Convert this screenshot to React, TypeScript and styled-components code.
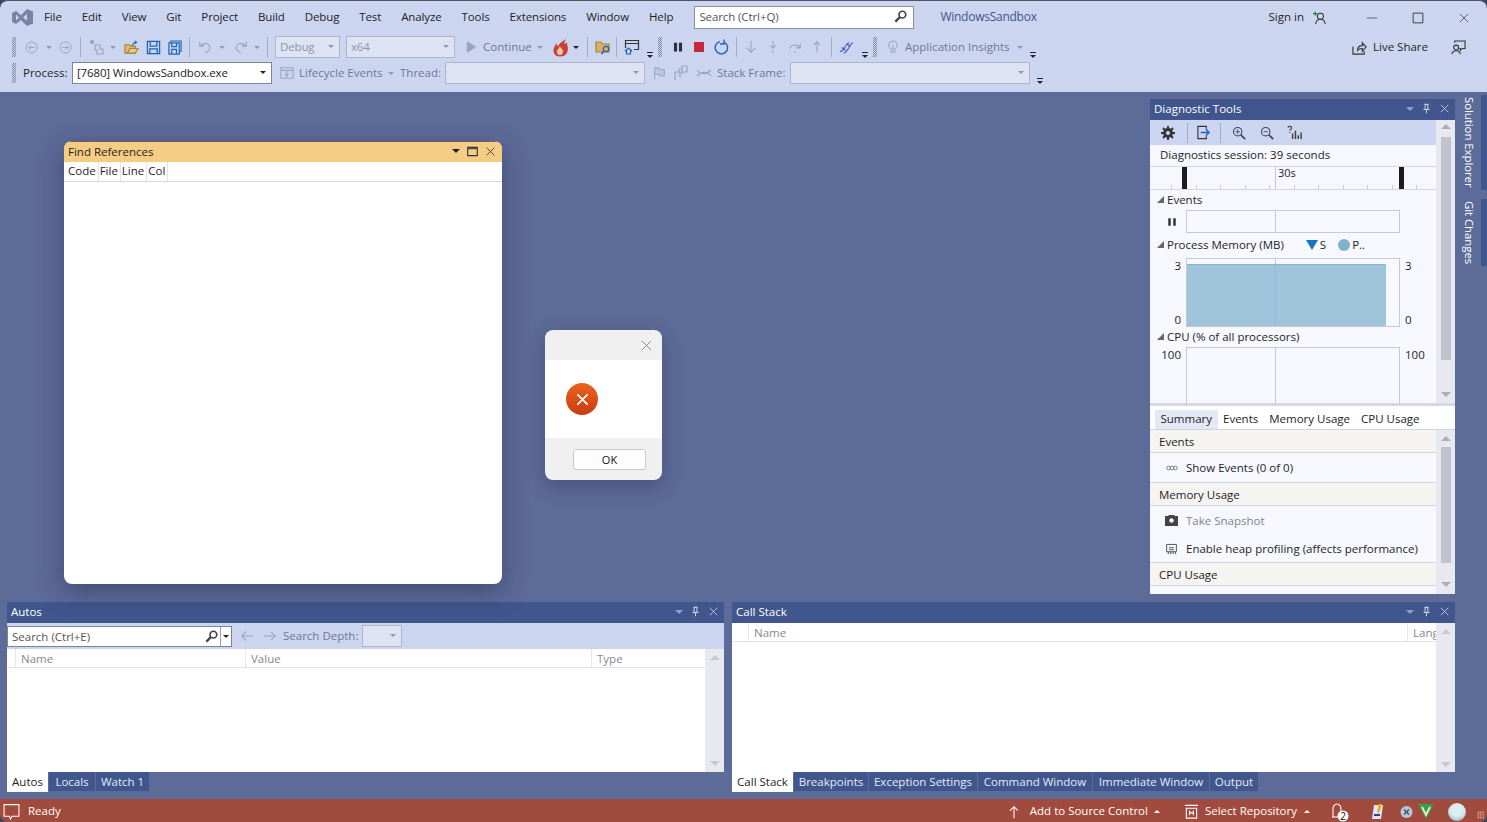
import React from "react";
import styled, { createGlobalStyle } from "styled-components";

const GlobalStyle = createGlobalStyle`
  html, body { margin: 0; padding: 0; background: #3f4554; }
  body { font-family: "Open Sans", "Liberation Sans", sans-serif; font-size: 11.5px; color: #1e1e1e; overflow: hidden; }
  * { box-sizing: border-box; }
`;

const Shell = styled.div`
  position: relative;
  width: 1487px;
  height: 822px;
  display: flex;
  flex-direction: column;
  background: #5d6b99;
  border-radius: 8px;
  overflow: hidden;
`;

/* ---- top chrome ---- */
const Chrome = styled.header`
  height: 92px;
  flex: none;
  background: #ccd5f0;
  border-top: 1px solid #4d5566;
  border-radius: 8px 8px 0 0;
`;
const TitleRow = styled.div`
  height: 33px;
  display: flex;
  align-items: center;
  padding-left: 12px;
`;
const MenuList = styled.nav`
  display: flex;
  margin-left: 1px;
`;
const MenuItem = styled.span`
  padding: 0 10px 2px;
  line-height: 20px;
  letter-spacing: -0.12px;
  white-space: nowrap;
`;
const SearchBox = styled.div`
  width: 220px;
  height: 23px;
  margin-left: 11px;
  background: #fff;
  border: 1px solid #8a8f9e;
  display: flex;
  align-items: center;
  justify-content: space-between;
  padding: 0 5px 2px 4px;
  color: #555;
  letter-spacing: -0.1px;
`;
const SolutionName = styled.span`
  margin-left: 26px;
  padding-bottom: 2px;
  color: #40568d;
  font-size: 12px;
  letter-spacing: -0.25px;
`;
const SignIn = styled.span`
  margin-left: auto;
  display: flex;
  align-items: center;
  gap: 9px;
`;
const WinButtons = styled.div`
  display: flex;
  align-items: center;
  gap: 34px;
  margin-left: 39px;
  margin-right: 17px;
`;
const ToolRow = styled.div`
  height: 26px;
  display: flex;
  align-items: center;
  padding: 0 21px 0 12px;
`;
const Slot = styled.span<{ $w: number; $ml?: number }>`
  flex: none;
  width: ${(p) => p.$w}px;
  margin-left: ${(p) => p.$ml ?? 0}px;
  display: flex;
  align-items: center;
  justify-content: center;
  svg { display: block; flex: none; }
`;
const Grip = styled.span<{ $ml?: number }>`
  flex: none;
  width: 4px;
  height: 20px;
  margin-left: ${(p) => p.$ml ?? 0}px;
  background: repeating-conic-gradient(#7f89a8 0 25%, transparent 0 50%) 0 0 / 2px 2px;
`;
const Sep = styled.span<{ $ml?: number }>`
  flex: none;
  width: 1px;
  height: 20px;
  margin-left: ${(p) => p.$ml ?? 0}px;
  background: #a3adc9;
`;
const caretColors = { dark: "#222", light: "#8f98b3", title: "#8fa2cf", white: "#fff" };
const Caret = styled.span<{ $ml?: number; $tone?: keyof typeof caretColors; $up?: boolean; $size?: number }>`
  flex: none;
  width: 0;
  height: 0;
  margin-left: ${(p) => p.$ml ?? 0}px;
  border-left: ${(p) => p.$size ?? 3}px solid transparent;
  border-right: ${(p) => p.$size ?? 3}px solid transparent;
  ${(p) => (p.$up ? "border-bottom" : "border-top")}: ${(p) => p.$size ?? 3}px solid ${(p) => caretColors[p.$tone ?? "dark"]};
`;
const Customize = styled.span<{ $ml?: number }>`
  flex: none;
  width: 6px;
  height: 8px;
  margin-left: ${(p) => p.$ml ?? 0}px;
  margin-top: 17px;
  border-top: 1px solid #222;
  &::after {
    content: "";
    display: block;
    margin-top: 2px;
    width: 0;
    height: 0;
    border-left: 3px solid transparent;
    border-right: 3px solid transparent;
    border-top: 3px solid #222;
  }
`;
const Combo = styled.div<{ $w: number; $ml?: number; $on?: boolean }>`
  flex: none;
  width: ${(p) => p.$w}px;
  height: 22px;
  margin-left: ${(p) => p.$ml ?? 0}px;
  padding: 0 5px 2px 4px;
  display: flex;
  align-items: center;
  justify-content: space-between;
  background: ${(p) => (p.$on ? "#fff" : "#dde3f3")};
  border: 1px solid ${(p) => (p.$on ? "#7d8499" : "#aeb5c8")};
  color: ${(p) => (p.$on ? "#1e1e1e" : "#8b93a8")};
  letter-spacing: -0.15px;
  white-space: nowrap;
`;
const labelColors = { normal: "#1e1e1e", dim: "#6f7790", white: "#fff" };
const Label = styled.span<{ $ml?: number; $w?: number; $tone?: keyof typeof labelColors }>`
  flex: none;
  margin-left: ${(p) => p.$ml ?? 0}px;
  padding-bottom: 2px;
  ${(p) => (p.$w ? `width: ${p.$w}px;` : "")}
  color: ${(p) => labelColors[p.$tone ?? "normal"]};
  white-space: nowrap;
`;
const Push = styled.span`
  margin-left: auto;
`;

/* ---- workspace ---- */
const TopArea = styled.div`
  position: relative;
  height: 510px;
  flex: none;
  display: flex;
`;
const DocWell = styled.div`
  flex: 1;
`;
const FindWindow = styled.section`
  position: absolute;
  left: 64px;
  top: 49px;
  width: 438px;
  height: 443px;
  z-index: 3;
  background: #fff;
  border-radius: 8px;
  overflow: hidden;
  box-shadow: 0 8px 26px rgba(20, 28, 60, 0.4);
`;
const FindTitle = styled.div`
  height: 21px;
  padding: 0 6px 2px 4px;
  background: #f5cc84;
  border-top: 1px solid #6b6255;
  display: flex;
  align-items: center;
  justify-content: space-between;
`;
const Controls = styled.div`
  display: flex;
  align-items: center;
  gap: 7px;
`;
const ColumnRow = styled.div`
  height: 20px;
  display: flex;
  border-bottom: 1px solid #d8d8d8;
`;
const Column = styled.span`
  padding: 0 2px 0 1px;
  border-right: 1px solid #e4e4e4;
  line-height: 18px;
  &:first-child { padding-left: 4px; }
`;
const Dialog = styled.section`
  position: absolute;
  left: 545px;
  top: 238px;
  width: 117px;
  height: 150px;
  z-index: 4;
  display: flex;
  flex-direction: column;
  background: #f0f0f0;
  border-radius: 8px;
  overflow: hidden;
  box-shadow: 0 6px 20px rgba(20, 28, 60, 0.3);
`;
const DialogHead = styled.div`
  height: 30px;
  padding-right: 9px;
  display: flex;
  align-items: center;
  justify-content: flex-end;
`;
const DialogBody = styled.div`
  height: 78px;
  background: #fff;
  padding-left: 21px;
  display: flex;
  align-items: center;
`;
const ErrorBadge = styled.span`
  width: 32px;
  height: 32px;
  border-radius: 50%;
  background: linear-gradient(#e8641f, #c93d10);
  display: flex;
  align-items: center;
  justify-content: center;
`;
const DialogFoot = styled.div`
  flex: 1;
  padding: 11px 16px 0 28px;
`;
const OkButton = styled.button`
  width: 73px;
  height: 21px;
  padding: 0;
  background: #fdfdfd;
  border: 1px solid #c8c8c8;
  border-radius: 3px;
  font: inherit;
  font-size: 11px;
  color: #111;
`;

/* ---- tool panels ---- */
const DiagPanel = styled.section`
  width: 305px;
  height: 495px;
  margin-top: 7px;
  flex: none;
  display: flex;
  flex-direction: column;
  background: #f7f8fe;
`;
const PanelTitle = styled.div`
  height: 21px;
  flex: none;
  padding: 0 5px 2px 4px;
  display: flex;
  align-items: center;
  justify-content: space-between;
  background: #40568d;
  color: #fff;
`;
const DiagUpper = styled.div`
  height: 283px;
  flex: none;
  display: flex;
`;
const DiagMain = styled.div`
  flex: 1;
  min-width: 0;
`;
const DiagBar = styled.div`
  height: 25px;
  padding-left: 10px;
  display: flex;
  align-items: center;
  background: #ccd5f0;
`;
const Session = styled.div`
  height: 22px;
  padding-left: 10px;
  line-height: 20px;
  border-bottom: 1px solid #d3d6e2;
`;
const Ruler = styled.div`
  position: relative;
  height: 23px;
  border-bottom: 1px solid #d3d6e2;
  background: repeating-linear-gradient(90deg, #c9ccd8 0 1px, transparent 1px 24.5px) 21px 18px / 100% 4px no-repeat;
`;
const RulerMark = styled.span<{ $x: number }>`
  position: absolute;
  left: ${(p) => p.$x}px;
  top: 0;
  width: 5px;
  height: 22px;
  background: #1c1c1c;
`;
const RulerLine = styled.span`
  position: absolute;
  left: 125px;
  top: 0;
  height: 22px;
  padding-left: 2px;
  line-height: 12px;
  font-size: 11px;
  border-left: 1px solid #c3c7d4;
`;
const SectionHead = styled.div<{ $h: number }>`
  height: ${(p) => p.$h}px;
  padding: 0 0 2px 7px;
  display: flex;
  align-items: center;
  gap: 3px;
`;
const Corner = styled.span`
  width: 0;
  height: 0;
  border-style: solid;
  border-width: 0 0 7px 7px;
  border-color: transparent transparent #666 transparent;
`;
const Legend = styled.span<{ $ml: number }>`
  margin-left: ${(p) => p.$ml}px;
  display: flex;
  align-items: center;
  gap: 2px;
`;
const Triangle = styled.span`
  width: 0;
  height: 0;
  border-left: 6px solid transparent;
  border-right: 6px solid transparent;
  border-top: 10px solid #1c73bd;
`;
const Dot = styled.span`
  width: 12px;
  height: 12px;
  border-radius: 50%;
  background: #7fb3cd;
`;
const GraphRow = styled.div<{ $h: number }>`
  height: ${(p) => p.$h}px;
  display: grid;
  grid-template-columns: 36px 214px 36px;
`;
const Axis = styled.div<{ $side: "left" | "right"; $mid?: boolean }>`
  display: flex;
  flex-direction: column;
  justify-content: ${(p) => (p.$mid ? "center" : "space-between")};
  margin-bottom: ${(p) => (p.$mid ? 0 : -1)}px;
  padding: ${(p) => (p.$mid ? "0 9px 0 0" : "0 5px")};
  align-items: ${(p) => (p.$side === "left" ? "flex-end" : "flex-start")};
  font-size: 11.5px;
  line-height: 16px;
`;
const Graph = styled.div<{ $open?: boolean }>`
  position: relative;
  display: flex;
  border: 1px solid #c6cad6;
  ${(p) => (p.$open ? "border-bottom: 0;" : "")}
`;
const GraphHalf = styled.div`
  width: 89px;
  border-right: 1px solid #c6cad6;
`;
const MemoryFill = styled.div`
  position: absolute;
  left: 0;
  top: 5px;
  bottom: 0;
  width: 199px;
  background: rgba(131, 180, 207, 0.75);
  border-top: 1px dotted #6fa2bd;
`;
const Scrollbar = styled.div`
  width: 19px;
  flex: none;
  display: flex;
  flex-direction: column;
  align-items: center;
  background: #e8e9f0;
`;
const ScrollThumb = styled.div<{ $top: number; $h: number }>`
  width: 10px;
  height: ${(p) => p.$h}px;
  margin-top: ${(p) => p.$top}px;
  background: #c0c3cd;
`;
const ScrollEnd = styled.div<{ $up?: boolean; $mt?: number; $faint?: boolean }>`
  width: 0;
  height: 0;
  margin-top: ${(p) => p.$mt ?? 0}px;
  border-left: 5px solid transparent;
  border-right: 5px solid transparent;
  ${(p) => (p.$up ? "border-bottom" : "border-top")}: 5px solid ${(p) => (p.$faint ? "#c6c9d2" : "#a9adb8")};
`;
const Splitter = styled.div`
  height: 3px;
  flex: none;
  background: #d6d9e3;
`;
const SummaryTabs = styled.div`
  height: 24px;
  flex: none;
  padding: 4px 0 0 5px;
  display: flex;
  background: #fff;
  border-bottom: 1px solid #cfd4e4;
`;
const SummaryTab = styled.span<{ $on?: boolean }>`
  padding: 0 5.5px 2px;
  line-height: 17px;
  background: ${(p) => (p.$on ? "#e3e8f4" : "transparent")};
`;
const DiagLower = styled.div`
  flex: 1;
  display: flex;
  min-height: 0;
`;
const SummaryList = styled.div`
  flex: 1;
  min-width: 0;
`;
const SummaryHead = styled.div`
  height: 23px;
  padding-left: 9px;
  line-height: 24px;
  background: #f5f4f1;
  border-bottom: 1px solid #d3d6e2;
`;
const SummaryRow = styled.div<{ $h: number; $dim?: boolean; $line?: boolean }>`
  height: ${(p) => p.$h}px;
  padding-left: 15px;
  display: flex;
  align-items: center;
  gap: 8px;
  color: ${(p) => (p.$dim ? "#80838e" : "#1e1e1e")};
  ${(p) => (p.$line ? "border-bottom: 1px solid #d3d6e2;" : "")}
`;
const SideStrip = styled.aside`
  width: 32px;
  flex: none;
  padding-top: 3px;
  display: flex;
  flex-direction: column;
  gap: 9px;
`;
const SideTab = styled.span`
  writing-mode: vertical-rl;
  width: 32px;
  padding: 2px 5px 2px 0;
  color: #fff;
  line-height: 14px;
  letter-spacing: -0.1px;
  white-space: nowrap;
  border-right: 6px solid #40568d;
`;
const BottomArea = styled.div`
  height: 197px;
  flex: none;
  padding: 0 32px 0 7px;
  display: flex;
  gap: 8px;
`;
const Dock = styled.section<{ $w: number }>`
  width: ${(p) => p.$w}px;
  flex: none;
  display: flex;
  flex-direction: column;
`;
const DockBody = styled.div`
  height: 149px;
  flex: none;
  display: flex;
  flex-direction: column;
  background: #fff;
`;
const DockTools = styled.div`
  height: 26px;
  flex: none;
  display: flex;
  align-items: center;
  background: #ccd5f0;
`;
const DockSearch = styled.div`
  width: 225px;
  height: 21px;
  display: flex;
  align-items: center;
  background: #fff;
  border: 1px solid #7d8499;
  color: #555;
  padding: 0 0 0 4px;
`;
const DockSearchDrop = styled.span`
  width: 11px;
  height: 19px;
  margin-left: 1px;
  display: flex;
  align-items: center;
  justify-content: center;
  border-left: 1px solid #9aa0b2;
`;
const DockContent = styled.div`
  flex: 1;
  min-height: 0;
  display: flex;
`;
const DockGrid = styled.div`
  flex: 1;
  min-width: 0;
`;
const GridHead = styled.div`
  height: 19px;
  display: flex;
  color: #848894;
  line-height: 20px;
  border-bottom: 1px solid #e0e2e8;
`;
const GridCell = styled.span<{ $w?: number }>`
  ${(p) => (p.$w ? `width: ${p.$w}px; flex: none;` : "flex: 1; min-width: 0;")}
  padding-left: 5px;
  overflow: hidden;
  white-space: nowrap;
  border-right: 1px solid #e6e7ec;
  &:last-child { border-right: 0; }
`;
const TabStrip = styled.div`
  height: 21px;
  flex: none;
  display: flex;
  gap: 1px;
`;
const DockTab = styled.span<{ $w: number; $on?: boolean }>`
  width: ${(p) => p.$w}px;
  height: ${(p) => (p.$on ? 20 : 19)}px;
  text-align: center;
  line-height: 19px;
  white-space: nowrap;
  background: ${(p) => (p.$on ? "#fff" : "#40568d")};
  color: ${(p) => (p.$on ? "#1e1e1e" : "#e6eaf6")};
`;
const StatusBar = styled.footer`
  margin-top: auto;
  height: 23px;
  flex: none;
  display: flex;
  align-items: center;
  padding: 2px 3px 0;
  background: #a14a3e;
  color: #fff;
`;
const Orb = styled.span`
  width: 18px;
  height: 18px;
  margin-left: 14px;
  border-radius: 50%;
  background: #dcecef;
  box-shadow: inset 0 -2px 3px rgba(80, 120, 140, 0.4);
`;
const ResizeGrip = styled.span`
  width: 7px;
  height: 8px;
  margin-left: 11px;
  margin-top: 6px;
  background-image: radial-gradient(#d59a90 0.8px, transparent 1px);
  background-size: 2.5px 2.5px;
`;

/* ---- drawings ---- */
type IconProps = { s?: number; c?: string; w?: number };
const Svg = ({ s = 16, c = "#222", w = 1.2, children }: IconProps & { children: React.ReactNode }) => (
  <svg width={s} height={s} viewBox="0 0 16 16" fill="none" stroke={c} strokeWidth={w}>
    {children}
  </svg>
);
const dim = "#9aa3bd";

const VsLogo = () => (
  <svg width="21" height="21" viewBox="0 0 21 21">
    <path d="M0 6l4-2 5 4.2L15 2l6 2.5v12L15 19l-6-6-5 4-4-2zM4 7.5v6l3-3zM15 7l-4 3.5 4 3.2z" fill="#7b83a2" />
  </svg>
);
const Magnifier = () => (
  <Svg s={15} c="#444">
    <circle cx="10" cy="6" r="3.6" strokeWidth="1.8" />
    <path d="M7.2 8.8L2.5 13.5" strokeWidth="2.6" />
  </Svg>
);
const CloseX = ({ s = 12, c = "#555", w }: IconProps) => (
  <Svg s={s} c={c} w={w}>
    <path d="M2.5 2.5l11 11M13.5 2.5l-11 11" />
  </Svg>
);
const Pin = ({ c = "#c9d2ea" }: IconProps) => (
  <Svg s={11} c={c}>
    <path d="M5 2h6M6 2v7M10 2v7M3.5 9.5h9M8 10v5" strokeWidth="1.5" />
  </Svg>
);
const PanelControls = () => (
  <Controls>
    <Caret $tone="title" $size={4} />
    <Pin />
    <CloseX s={11} c="#c9d2ea" />
  </Controls>
);
const CircleArrow = ({ back }: { back?: boolean }) => (
  <Svg s={13} c={dim}>
    <circle cx="8" cy="8" r="6.8" />
    <path d={back ? "M12 8H4.5M7.5 5L4.5 8l3 3" : "M4 8h7.5M8.5 5l3 3-3 3"} />
  </Svg>
);
const NewProject = () => (
  <Svg c={dim}>
    <path d="M6 6h5v4h3v5H8v-4H6zM3 1v4M1 3h4M1.5 1.5l3 3M4.5 1.5l-3 3" />
  </Svg>
);
const OpenFolder = () => (
  <Svg s={15} c="#a9822d">
    <path d="M1 5h5l1 1.5h5V14H1z" fill="#dcb67a" />
    <path d="M4 14l2-5h9l-3 5z" fill="#e8c98f" />
    <path d="M9 6c0-2 2-3.5 4-3.5M11.5 1l2 1.5-2 1.7" stroke="#2b6fc0" />
  </Svg>
);
const Floppy = ({ double }: { double?: boolean }) => (
  <Svg s={15} c="#1d66b5">
    {double ? (
      <>
        <path d="M3 3V1h11v11h-2" />
        <path d="M1 3h11v12H1zM4 3v4h5V3M4 15v-5h5v5" strokeWidth="1.3" />
      </>
    ) : (
      <path d="M1.5 1.5h13v13h-13zM4.5 1.5v5h7v-5M4 14.5V9.5h8v5" strokeWidth="1.4" />
    )}
  </Svg>
);
const UndoArrow = ({ redo }: { redo?: boolean }) => (
  <Svg s={14} c={dim}>
    <g transform={redo ? "matrix(-1 0 0 1 16 0)" : undefined}>
      <path d="M2 2v5h5M2.5 7C5 3.5 11 3 13 6.5 15 10 12 13 8 15" />
    </g>
  </Svg>
);
const Flame = () => (
  <svg width="17" height="19" viewBox="0 0 17 19">
    <path d="M8 18.5C3 18.5 1 15 1.5 11.5 2 9 3.5 7.5 4 5.5c1 .8 1.5 2 1.6 3C7 6 9.5 3.5 14 1c-1 2-2 3.5-1.5 5 .8-.4 1.5-1 2-1.8 1.5 4 2 7.5.5 10.5-1.2 2.8-4 3.8-7 3.8z" fill="#c8423a" />
    <path d="M8 17c-2.5 0-3.5-2-3-4 .5-1.5 2-2.500 2.5-4.500 2 1.500 4 3.500 3.500 6-.3 1.500-1.500 2.500-3 2.500z" fill="#f4c9a0" />
  </svg>
);
const FolderSearch = () => (
  <Svg c="#a9822d">
    <path d="M1 3h5l1 2h7v8H1z" fill="#d8b06a" />
    <circle cx="11" cy="10" r="2.7" stroke="#1d66b5" />
    <path d="M9 12l-2.5 3" stroke="#1d66b5" strokeWidth="1.5" />
  </Svg>
);
const WindowHome = () => (
  <Svg c="#333">
    <path d="M1.5 9V1.5h13v9H10M1.5 4.5h13" />
    <path d="M1 12l3.5-3L8 12M2.5 11v4h4v-4" stroke="#1d66b5" />
  </Svg>
);
const Restart = () => (
  <Svg s={16} c="#1d66b5">
    <path d="M7 2.6A6.2 6.2 0 1 0 12 3.6M11 0.5V5h-4" strokeWidth="1.4" />
  </Svg>
);
const StepArrow = ({ kind }: { kind: string }) => {
  const d: Record<string, string> = {
    down: "M8 1v13M3 9l5 5 5-5",
    into: "M8 1v8M4.5 6L8 9.5 11.5 6M8 12v3",
    over: "M2 10C3 5 11 4 14 9M14 4v5h-5M8 13v2",
    out: "M8 14V2M4.5 5.5L8 2l3.5 3.5",
  };
  return (
    <Svg s={14} c={dim}>
      <path d={d[kind]} />
    </Svg>
  );
};
const Helix = () => (
  <Svg s={15} c="#3e5fb0">
    <path d="M1 12C5 14 6 4 11 3M5 14C10 13 11 4 15 3M3 8l4 3M8 4l4 3" />
  </Svg>
);
const Bulb = () => (
  <Svg s={14} c={dim}>
    <circle cx="8" cy="6" r="4.8" />
    <path d="M6 11v3h4v-3M8 6v5" />
  </Svg>
);
const Lifecycle = () => (
  <Svg s={14} c={dim}>
    <path d="M1 2h14v12H1zM1 5h14M9 6L6 10h3l-2 3" />
  </Svg>
);
const Flag = ({ two }: { two?: boolean }) =>
  two ? (
    <Svg c={dim}>
      <path d="M2 15V7h5v5M9 9V1h5v6H9M6 7V4h3" />
    </Svg>
  ) : (
    <Svg s={13} c={dim}>
      <path d="M2 15V1h6v2h6v8H8V9H2" fill="#bcc5de" />
    </Svg>
  );
const Thread = () => (
  <Svg c={dim}>
    <path d="M1 5c4 5 9 5 14 0M1 11c5-5 10-5 14 0" />
  </Svg>
);
const Person = ({ plus }: { plus?: boolean }) => (
  <Svg s={14} c="#333">
    <circle cx="8.5" cy="6" r="3.5" />
    <path d="M3 15c.6-4 3-5.5 5.5-5.5S13.4 11 14 15" />
    {plus && <path d="M0 3h5M2.5 .5v5" stroke="#16803c" />}
  </Svg>
);
const LiveShareIcon = () => (
  <Svg s={15} c="#333">
    <path d="M1 7v8h12v-3M6 11c0-3 2-5 5-5V3l4 4.5L11 12V9c-2 0-4 .5-5 2z" />
  </Svg>
);
const Feedback = () => (
  <Svg s={15} c="#333">
    <circle cx="5.5" cy="8" r="2.6" />
    <path d="M1 15c.4-2.5 2-3.5 4.5-3.5s4 1 4.5 3.5M4 3V1h11v8h-3l-2 2V9H9" />
  </Svg>
);
const Gear = () => (
  <Svg s={16} c="#333">
    <circle cx="8" cy="8" r="3.5" strokeWidth="3" />
    <path d="M8 1v2.5M8 12.5V15M1 8h2.5M12.5 8H15M3 3l2 2M11 11l2 2M13 3l-2 2M5 11l-2 2" strokeWidth="2" />
  </Svg>
);
const ExportIcon = () => (
  <Svg s={15} c="#333">
    <path d="M11 4V1.5H2v13h9V12" />
    <path d="M5 8h9M10.5 4.5L14 8l-3.5 3.5" stroke="#1d66b5" strokeWidth="1.5" />
  </Svg>
);
const Zoom = ({ plus }: { plus?: boolean }) => (
  <Svg s={14} c="#444">
    <circle cx="6.5" cy="6.5" r="4.8" />
    <path d="M10 10l5 5" strokeWidth="2" />
    <path d={plus ? "M4 6.5h5M6.5 4v5" : "M4 6.5h5"} stroke="#1d66b5" />
  </Svg>
);
const ChartHelp = () => (
  <Svg s={15} c="#444">
    <path d="M6 15V9M9 15V6M12 15v-4M15 15V8" strokeWidth="1.6" />
    <path d="M1 3c0-2 4-2 4 0 0 1.5-2 1.5-2 3M3 7.5v1" />
  </Svg>
);
const LinkIcon = () => (
  <Svg s={12} c="#777">
    <circle cx="3.5" cy="8" r="2.5" />
    <circle cx="8" cy="8" r="2.5" />
    <circle cx="12.5" cy="8" r="2.5" />
  </Svg>
);
const Camera = () => (
  <svg width="13" height="11" viewBox="0 0 13 11">
    <path d="M0 1h3l1-1h5l1 1h3v10H0z" fill="#444" />
    <circle cx="6.5" cy="5.5" r="2.2" fill="#f7f8fe" />
  </svg>
);
const Chip = () => (
  <Svg s={13} c="#555">
    <path d="M2 3h12v9H2zM5 7h6M5 9.5h6M4 12v3M7 12v3M10 12v3M13 12v3" />
  </Svg>
);
const ArrowH = ({ back }: { back?: boolean }) => (
  <Svg s={14} c={dim}>
    <path d={back ? "M15 8H2M7 3L2 8l5 5" : "M1 8h13M9 3l5 5-5 5"} />
  </Svg>
);
const ReadyIcon = () => (
  <Svg s={17} c="#fff" w={1}>
    <path d="M1 1.5h14v11H8.5L7 15l-1-2.5H1z" />
  </Svg>
);
const RepoIcon = () => (
  <Svg s={15} c="#fff">
    <path d="M1 1.5h14M2.5 4.5h11V15h-11zM6 7v5M10 7v5M6 9.5h4" />
  </Svg>
);
const Bell = () => (
  <svg width="20" height="20" viewBox="0 0 20 20">
    <path d="M2 15h9M3 15V7c0-3 2-5 4-5s4 2 4 5v4" fill="none" stroke="#fff" strokeWidth="1.1" />
    <circle cx="13" cy="14" r="5.5" fill="#fff" />
    <text x="13" y="17.5" fontSize="10" textAnchor="middle" fill="#111" fontFamily="Open Sans">2</text>
  </svg>
);
const PencilBadge = () => (
  <svg width="15" height="18" viewBox="0 0 15 18">
    <path d="M3 2h9l-2 14H1z" fill="#dfe6f5" />
    <path d="M6 9L8 1h3L8 10z" fill="#e7b100" />
    <path d="M3 12h6" stroke="#2d3f8c" strokeWidth="2" />
  </svg>
);
const CloudX = () => (
  <svg width="15" height="14" viewBox="0 0 15 14">
    <circle cx="7.5" cy="7" r="6" fill="#b9c7dc" />
    <path d="M5 4.5l5 5M10 4.5l-5 5" stroke="#41526e" strokeWidth="1.5" />
  </svg>
);
const ShieldV = () => (
  <svg width="16" height="15" viewBox="0 0 16 15">
    <path d="M0 0h16l-8 15z" fill="#3e9d48" />
    <path d="M4 3l4 8 4-8" fill="none" stroke="#dff0d8" strokeWidth="1.8" />
  </svg>
);

const menus = ["File", "Edit", "View", "Git", "Project", "Build", "Debug", "Test", "Analyze", "Tools", "Extensions", "Window", "Help"];

const App = () => (
  <Shell>
    <GlobalStyle />
    <Chrome>
      <TitleRow>
        <VsLogo />
        <MenuList>
          {menus.map((m) => (
            <MenuItem key={m}>{m}</MenuItem>
          ))}
        </MenuList>
        <SearchBox>
          Search (Ctrl+Q)
          <Magnifier />
        </SearchBox>
        <SolutionName>WindowsSandbox</SolutionName>
        <SignIn>
          <Label>Sign in</Label>
          <Person plus />
        </SignIn>
        <WinButtons>
          <Svg s={12} c="#555"><path d="M1 8h14" /></Svg>
          <Svg s={12} c="#333"><path d="M1.5 1.5h13v13h-13z" /></Svg>
          <CloseX />
        </WinButtons>
      </TitleRow>
      <ToolRow>
        <Grip />
        <Slot $w={13} $ml={9}><CircleArrow back /></Slot>
        <Caret $ml={8} $tone="light" />
        <Slot $w={13} $ml={7}><CircleArrow /></Slot>
        <Sep $ml={8} />
        <Slot $w={16} $ml={8}><NewProject /></Slot>
        <Caret $ml={5} $tone="light" />
        <Slot $w={14} $ml={8}><OpenFolder /></Slot>
        <Slot $w={14} $ml={8}><Floppy /></Slot>
        <Slot $w={14} $ml={8}><Floppy double /></Slot>
        <Sep $ml={7} />
        <Slot $w={13} $ml={8}><UndoArrow /></Slot>
        <Caret $ml={8} $tone="light" />
        <Slot $w={13} $ml={9}><UndoArrow redo /></Slot>
        <Caret $ml={7} $tone="light" />
        <Sep $ml={7} />
        <Combo $w={65} $ml={7}>Debug<Caret $tone="light" /></Combo>
        <Combo $w={109} $ml={6}>x64<Caret $tone="light" /></Combo>
        <Slot $w={10} $ml={11}>
          <Svg s={12} c={dim}><path d="M3 1l11 7-11 7z" fill={dim} /></Svg>
        </Slot>
        <Label $ml={7} $w={50} $tone="dim">Continue</Label>
        <Caret $ml={4} $tone="light" />
        <Slot $w={16} $ml={9}><Flame /></Slot>
        <Caret $ml={5} />
        <Sep $ml={8} />
        <Slot $w={15} $ml={7}><FolderSearch /></Slot>
        <Sep $ml={6} />
        <Slot $w={16} $ml={7}><WindowHome /></Slot>
        <Customize $ml={7} />
        <Grip $ml={5} />
        <Slot $w={9} $ml={11}>
          <Svg s={10} c="#2b2f3c"><path d="M4 1v14M12 1v14" strokeWidth="5" /></Svg>
        </Slot>
        <Slot $w={10} $ml={12}>
          <Svg s={10} c="#c5283d"><path d="M0 0h16v16H0z" fill="#c5283d" /></Svg>
        </Slot>
        <Slot $w={15} $ml={9}><Restart /></Slot>
        <Sep $ml={8} />
        <Slot $w={11} $ml={8}><StepArrow kind="down" /></Slot>
        <Slot $w={7} $ml={13}><StepArrow kind="into" /></Slot>
        <Slot $w={13} $ml={12}><StepArrow kind="over" /></Slot>
        <Slot $w={9} $ml={11}><StepArrow kind="out" /></Slot>
        <Sep $ml={10} />
        <Slot $w={13} $ml={8}><Helix /></Slot>
        <Customize $ml={9} />
        <Grip $ml={5} />
        <Slot $w={11} $ml={10}><Bulb /></Slot>
        <Label $ml={7} $w={105} $tone="dim">Application Insights</Label>
        <Caret $ml={7} $tone="light" />
        <Customize $ml={7} />
        <Push />
        <Slot $w={15}><LiveShareIcon /></Slot>
        <Label $ml={6}>Live Share</Label>
        <Slot $w={15} $ml={23}><Feedback /></Slot>
      </ToolRow>
      <ToolRow>
        <Grip />
        <Label $ml={7} $w={43}>Process:</Label>
        <Combo $w={200} $ml={6} $on>[7680] WindowsSandbox.exe<Caret /></Combo>
        <Slot $w={13} $ml={8}><Lifecycle /></Slot>
        <Label $ml={6} $w={83} $tone="dim">Lifecycle Events</Label>
        <Caret $ml={6} $tone="light" />
        <Label $ml={6} $w={39} $tone="dim">Thread:</Label>
        <Combo $w={200} $ml={6}><span /><Caret $tone="light" /></Combo>
        <Slot $w={13} $ml={8}><Flag /></Slot>
        <Slot $w={14} $ml={8}><Flag two /></Slot>
        <Slot $w={15} $ml={8}><Thread /></Slot>
        <Label $ml={6} $w={67} $tone="dim">Stack Frame:</Label>
        <Combo $w={240} $ml={6}><span /><Caret $tone="light" /></Combo>
        <Customize $ml={7} />
      </ToolRow>
    </Chrome>

    <TopArea>
      <DocWell />
      <FindWindow>
        <FindTitle>
          Find References
          <Controls>
            <Caret $size={4} />
            <Svg s={11} c="#333"><path d="M1 2h14v12H1zM1 4h14" strokeWidth="1.6" /></Svg>
            <CloseX s={11} c="#333" />
          </Controls>
        </FindTitle>
        <ColumnRow>
          <Column>Code</Column>
          <Column>File</Column>
          <Column>Line</Column>
          <Column>Col</Column>
        </ColumnRow>
      </FindWindow>
      <Dialog>
        <DialogHead><CloseX s={13} c="#888" /></DialogHead>
        <DialogBody>
          <ErrorBadge><CloseX s={15} c="#fff" w={1.8} /></ErrorBadge>
        </DialogBody>
        <DialogFoot><OkButton>OK</OkButton></DialogFoot>
      </Dialog>

      <DiagPanel>
        <PanelTitle>Diagnostic Tools<PanelControls /></PanelTitle>
        <DiagUpper>
          <DiagMain>
            <DiagBar>
              <Slot $w={16}><Gear /></Slot>
              <Sep $ml={11} />
              <Slot $w={15} $ml={8}><ExportIcon /></Slot>
              <Sep $ml={9} />
              <Slot $w={14} $ml={11}><Zoom plus /></Slot>
              <Slot $w={14} $ml={14}><Zoom /></Slot>
              <Slot $w={15} $ml={13}><ChartHelp /></Slot>
            </DiagBar>
            <Session>Diagnostics session: 39 seconds</Session>
            <Ruler>
              <RulerMark $x={32} />
              <RulerLine>30s</RulerLine>
              <RulerMark $x={249} />
            </Ruler>
            <SectionHead $h={20}><Corner />Events</SectionHead>
            <GraphRow $h={23}>
              <Axis $side="left" $mid>
                <Svg s={10} c="#333"><path d="M4 2v12M12 2v12" strokeWidth="4" /></Svg>
              </Axis>
              <Graph><GraphHalf /></Graph>
            </GraphRow>
            <SectionHead $h={25}>
              <Corner />Process Memory (MB)
              <Legend $ml={19}><Triangle />S</Legend>
              <Legend $ml={9}><Dot />P..</Legend>
            </SectionHead>
            <GraphRow $h={69}>
              <Axis $side="left"><span>3</span><span>0</span></Axis>
              <Graph><GraphHalf /><MemoryFill /></Graph>
              <Axis $side="right"><span>3</span><span>0</span></Axis>
            </GraphRow>
            <SectionHead $h={20}><Corner />CPU (% of all processors)</SectionHead>
            <GraphRow $h={56}>
              <Axis $side="left"><span>100</span></Axis>
              <Graph $open><GraphHalf /></Graph>
              <Axis $side="right"><span>100</span></Axis>
            </GraphRow>
          </DiagMain>
          <Scrollbar>
            <ScrollEnd $up $mt={4} />
            <ScrollThumb $top={8} $h={223} />
            <ScrollEnd $mt={32} />
          </Scrollbar>
        </DiagUpper>
        <Splitter />
        <SummaryTabs>
          <SummaryTab $on>Summary</SummaryTab>
          <SummaryTab>Events</SummaryTab>
          <SummaryTab>Memory Usage</SummaryTab>
          <SummaryTab>CPU Usage</SummaryTab>
        </SummaryTabs>
        <DiagLower>
          <SummaryList>
            <SummaryHead>Events</SummaryHead>
            <SummaryRow $h={30} $line><Slot $w={13}><LinkIcon /></Slot>Show Events (0 of 0)</SummaryRow>
            <SummaryHead>Memory Usage</SummaryHead>
            <SummaryRow $h={28} $dim><Slot $w={13}><Camera /></Slot>Take Snapshot</SummaryRow>
            <SummaryRow $h={29} $line><Slot $w={13}><Chip /></Slot>Enable heap profiling (affects performance)</SummaryRow>
            <SummaryHead>CPU Usage</SummaryHead>
          </SummaryList>
          <Scrollbar>
            <ScrollEnd $up $mt={6} />
            <ScrollThumb $top={6} $h={116} />
            <ScrollEnd $mt={19} />
          </Scrollbar>
        </DiagLower>
      </DiagPanel>
      <SideStrip>
        <SideTab>Solution Explorer</SideTab>
        <SideTab>Git Changes</SideTab>
      </SideStrip>
    </TopArea>

    <BottomArea>
      <Dock $w={717}>
        <PanelTitle>Autos<PanelControls /></PanelTitle>
        <DockBody>
          <DockTools>
            <DockSearch>
              Search (Ctrl+E)
              <Push />
              <Magnifier />
              <DockSearchDrop><Caret /></DockSearchDrop>
            </DockSearch>
            <Slot $w={14} $ml={8}><ArrowH back /></Slot>
            <Slot $w={14} $ml={9}><ArrowH /></Slot>
            <Label $ml={6} $w={75} $tone="dim">Search Depth:</Label>
            <Combo $w={40} $ml={4}><span /><Caret $tone="light" /></Combo>
          </DockTools>
          <DockContent>
            <DockGrid>
              <GridHead>
                <GridCell $w={9} />
                <GridCell $w={230}>Name</GridCell>
                <GridCell $w={346}>Value</GridCell>
                <GridCell>Type</GridCell>
              </GridHead>
            </DockGrid>
            <Scrollbar>
              <ScrollEnd $up $mt={6} $faint />
              <ScrollEnd $mt={101} $faint />
            </Scrollbar>
          </DockContent>
        </DockBody>
        <TabStrip>
          <DockTab $w={41} $on>Autos</DockTab>
          <DockTab $w={46}>Locals</DockTab>
          <DockTab $w={53}>Watch 1</DockTab>
        </TabStrip>
      </Dock>
      <Dock $w={723}>
        <PanelTitle>Call Stack<PanelControls /></PanelTitle>
        <DockBody>
          <DockContent>
            <DockGrid>
              <GridHead>
                <GridCell $w={17} />
                <GridCell $w={659}>Name</GridCell>
                <GridCell>Lang</GridCell>
              </GridHead>
            </DockGrid>
            <Scrollbar>
              <ScrollEnd $up $mt={6} $faint />
              <ScrollEnd $mt={128} $faint />
            </Scrollbar>
          </DockContent>
        </DockBody>
        <TabStrip>
          <DockTab $w={61} $on>Call Stack</DockTab>
          <DockTab $w={74}>Breakpoints</DockTab>
          <DockTab $w={108}>Exception Settings</DockTab>
          <DockTab $w={114}>Command Window</DockTab>
          <DockTab $w={116}>Immediate Window</DockTab>
          <DockTab $w={48}>Output</DockTab>
        </TabStrip>
      </Dock>
    </BottomArea>

    <StatusBar>
      <ReadyIcon />
      <Label $ml={8} $tone="white">Ready</Label>
      <Push />
      <Svg s={14} c="#fff"><path d="M8 15V2M3.5 6.5L8 2l4.5 4.5" /></Svg>
      <Label $ml={9} $tone="white">Add to Source Control</Label>
      <Caret $ml={6} $up $tone="white" />
      <Slot $w={15} $ml={24}><RepoIcon /></Slot>
      <Label $ml={6} $tone="white">Select Repository</Label>
      <Caret $ml={7} $up $tone="white" />
      <Slot $w={20} $ml={20}><Bell /></Slot>
      <Slot $w={15} $ml={21}><PencilBadge /></Slot>
      <Slot $w={15} $ml={13}><CloudX /></Slot>
      <Slot $w={16} $ml={4}><ShieldV /></Slot>
      <Orb />
      <ResizeGrip />
    </StatusBar>
  </Shell>
);

export default App;
